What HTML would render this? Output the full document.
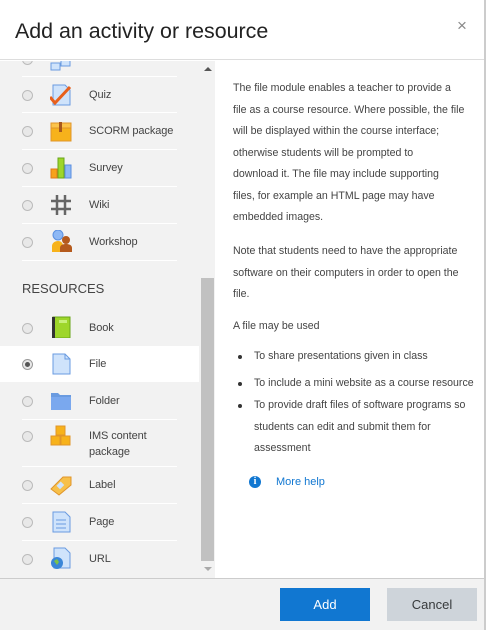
<!DOCTYPE html>
<html><head><meta charset="utf-8"><style>
*{margin:0;padding:0;box-sizing:border-box}
body{width:486px;height:630px;overflow:hidden;background:#fff;font-family:"Liberation Sans",sans-serif;color:#373a3c;position:relative}
.a{position:absolute}
.t{font-size:11px;white-space:nowrap}
.radio{position:absolute;left:22px;width:11px;height:11px;border-radius:50%;border:1px solid #bbb;background:#e8e8e8}
.sep{position:absolute;left:22px;width:155px;height:1px;background:#fff}
.ic{position:absolute;left:50px;width:22px;height:22px}
.lb{position:absolute;left:89px;font-size:11px;color:#444;letter-spacing:-0.1px}
.r{position:absolute;left:233px;font-size:10.6px;color:#444;line-height:21.5px;white-space:nowrap}
</style></head><body>
<div class="a" style="left:0;top:0;width:484px;height:60px;border-bottom:1px solid #ddd"></div>
<div class="a" style="left:15px;top:19px;font-size:21.4px;color:#222">Add an activity or resource</div>
<div class="a" style="left:457px;top:16px;font-size:17px;color:#888">×</div>
<div class="a" style="left:484px;top:0;width:2px;height:630px;background:#ccc"></div>
<div class="a" style="left:0;top:61px;width:215px;height:517px;background:#f2f2f2;overflow:hidden"></div>
<div class="a" style="left:0;top:346px;width:199px;height:36px;background:#fff"></div>
<div class="a" style="left:201px;top:278px;width:13px;height:283px;background:#c1c1c1"></div>
<div class="a" style="left:204px;top:67px;width:0;height:0;border-left:4px solid transparent;border-right:4px solid transparent;border-bottom:4px solid #555"></div>
<div class="a" style="left:204px;top:567px;width:0;height:0;border-left:4px solid transparent;border-right:4px solid transparent;border-top:4px solid #aaa"></div>

<div class="a" style="left:0;top:61px;width:200px;height:10px;overflow:hidden">
<div class="radio" style="top:-7px"></div>
<svg class="ic" style="top:-12px" viewBox="0 0 22 22"><rect x="1" y="14" width="9" height="7" fill="#cfe3fb" stroke="#6a9be0"/><rect x="11" y="11" width="9" height="6" fill="#cfe3fb" stroke="#6a9be0"/></svg>
<div class="lb" style="top:-9px">Lesson</div>
</div>
<div class="sep" style="top:76px"></div>

<div class="radio" style="top:90px"></div>
<svg class="ic" style="top:84px" viewBox="0 0 22 22"><path d="M3 1h12l5 5v15H3z" fill="#cfe3fb" stroke="#6a9be0"/><path d="M0 13l5 6L20 3" fill="none" stroke="#e8601c" stroke-width="3"/></svg>
<div class="lb" style="top:89px">Quiz</div>
<div class="sep" style="top:112px"></div>

<div class="radio" style="top:126px"></div>
<svg class="ic" style="top:120px" viewBox="0 0 22 22"><rect x="1" y="3" width="20" height="18" fill="#f7b21b" stroke="#e0952a"/><rect x="1" y="3" width="20" height="5" fill="#fcc44a" stroke="#e0952a"/><rect x="9" y="2" width="3" height="10" fill="#a8581d"/></svg>
<div class="lb" style="top:125px">SCORM package</div>
<div class="sep" style="top:149px"></div>

<div class="radio" style="top:163px"></div>
<svg class="ic" style="top:157px" viewBox="0 0 22 22"><rect x="1" y="12" width="6" height="9" fill="#f7a21b" stroke="#e07a1a"/><rect x="8" y="1" width="6" height="20" fill="#9ed62a" stroke="#6aa51a"/><rect x="15" y="8" width="6" height="13" fill="#8db8f5" stroke="#5a8fe0"/></svg>
<div class="lb" style="top:162px">Survey</div>
<div class="sep" style="top:186px"></div>

<div class="radio" style="top:200px"></div>
<svg class="ic" style="top:194px" viewBox="0 0 22 22" fill="none" stroke="#666" stroke-width="2.5"><path d="M7 1v20M15 1v20M1 7h20M1 15h20"/></svg>
<div class="lb" style="top:199px">Wiki</div>
<div class="sep" style="top:223px"></div>

<div class="radio" style="top:237px"></div>
<svg class="ic" style="top:230px" viewBox="0 0 22 22"><circle cx="8" cy="5" r="5" fill="#8db8f5" stroke="#5a8fe0"/><path d="M2 22v-6c0-3 3-5 6-5s5 2 5 5v6z" fill="#f7b21b"/><circle cx="16" cy="10" r="4" fill="#b55a1d"/><path d="M10 22v-4c0-3 3-4 6-4s6 1 6 4v4z" fill="#b55a1d"/></svg>
<div class="lb" style="top:236px">Workshop</div>
<div class="sep" style="top:260px"></div>

<div class="a" style="left:22px;top:281px;font-size:13px;color:#444">RESOURCES</div>

<div class="radio" style="top:323px"></div>
<svg class="ic" style="top:316px" viewBox="0 0 22 22"><rect x="3" y="1" width="17" height="21" fill="#9ed62a" stroke="#6aa51a"/><rect x="2" y="1" width="3" height="21" fill="#333"/><rect x="9" y="4" width="8" height="3" fill="#c8f07a"/></svg>
<div class="lb" style="top:322px">Book</div>

<div class="radio" style="top:359px;background:#e8e8e8;border-color:#999"></div>
<div class="a" style="left:25px;top:362px;width:5px;height:5px;border-radius:50%;background:#555"></div>
<svg class="ic" style="top:353px" viewBox="0 0 22 22"><path d="M3 1h12l5 5v15H3z" fill="#cfe3fb" stroke="#6a9be0"/><path d="M15 1v5h5" fill="none" stroke="#6a9be0"/></svg>
<div class="lb" style="top:358px">File</div>

<div class="radio" style="top:396px"></div>
<svg class="ic" style="top:390px" viewBox="0 0 22 22"><path d="M1 3h7l2 2h11v15H1z" fill="#6a9be0"/><rect x="1" y="7" width="20" height="13" fill="#7aa8ee"/></svg>
<div class="lb" style="top:395px">Folder</div>
<div class="sep" style="top:419px"></div>

<div class="radio" style="top:431px"></div>
<svg class="ic" style="top:425px" viewBox="0 0 22 22" fill="#f7b21b" stroke="#e0952a"><rect x="6" y="1" width="9" height="9"/><rect x="1" y="11" width="9" height="9"/><rect x="11" y="11" width="9" height="9"/></svg>
<div class="lb" style="top:428px;line-height:16px">IMS content<br>package</div>
<div class="sep" style="top:466px"></div>

<div class="radio" style="top:480px"></div>
<svg class="ic" style="top:474px" viewBox="0 0 22 22"><path d="M1 15L13 3l8 0 0 8L9 21z" fill="#f7c04a" stroke="#e0952a"/><rect x="7" y="9" width="6" height="5" fill="#cfe3fb" transform="rotate(-45 10 11)"/></svg>
<div class="lb" style="top:479px">Label</div>
<div class="sep" style="top:503px"></div>

<div class="radio" style="top:517px"></div>
<svg class="ic" style="top:511px" viewBox="0 0 22 22"><path d="M3 1h12l5 5v15H3z" fill="#cfe3fb" stroke="#6a9be0"/><path d="M6 9h10M6 13h10M6 17h10" stroke="#6a9be0"/></svg>
<div class="lb" style="top:516px">Page</div>
<div class="sep" style="top:540px"></div>

<div class="radio" style="top:554px"></div>
<svg class="ic" style="top:547px" viewBox="0 0 22 22"><path d="M4 1h11l5 5v15H4z" fill="#cfe3fb" stroke="#6a9be0"/><circle cx="7" cy="16" r="6" fill="#3a86d8"/><path d="M4 14l3-2 2 3-2 3z" fill="#7cc24a"/></svg>
<div class="lb" style="top:553px">URL</div>

<div class="r" style="top:78px">The file module enables a teacher to provide a<br>file as a course resource. Where possible, the file<br>will be displayed within the course interface;<br>otherwise students will be prompted to<br>download it. The file may include supporting<br>files, for example an HTML page may have<br>embedded images.</div>
<div class="r" style="top:241px">Note that students need to have the appropriate<br>software on their computers in order to open the<br>file.</div>
<div class="r" style="top:316px">A file may be used</div>
<div class="r" style="top:346px;left:254px">To share presentations given in class</div>
<div class="r" style="top:373px;left:254px">To include a mini website as a course resource</div>
<div class="r" style="top:395px;left:254px">To provide draft files of software programs so<br>students can edit and submit them for<br>assessment</div>
<div class="a" style="left:238px;top:355px;width:4px;height:4px;border-radius:50%;background:#333"></div>
<div class="a" style="left:238px;top:382px;width:4px;height:4px;border-radius:50%;background:#333"></div>
<div class="a" style="left:238px;top:404px;width:4px;height:4px;border-radius:50%;background:#333"></div>
<div class="a" style="left:249px;top:476px;width:12px;height:12px;border-radius:50%;background:#1177d1;color:#fff;font-size:10px;font-weight:bold;text-align:center;line-height:12px;font-family:'Liberation Serif',serif">i</div>
<div class="a t" style="left:276px;top:476px;color:#1177d1">More help</div>

<div class="a" style="left:0;top:578px;width:484px;height:52px;background:#f2f2f2;border-top:1px solid #ccc"></div>
<div class="a" style="left:280px;top:588px;width:90px;height:33px;background:#1177d1;color:#fff;font-size:13px;text-align:center;line-height:33px">Add</div>
<div class="a" style="left:387px;top:588px;width:90px;height:33px;background:#ced4da;color:#373a3c;font-size:13px;text-align:center;line-height:33px">Cancel</div>
</body></html>
